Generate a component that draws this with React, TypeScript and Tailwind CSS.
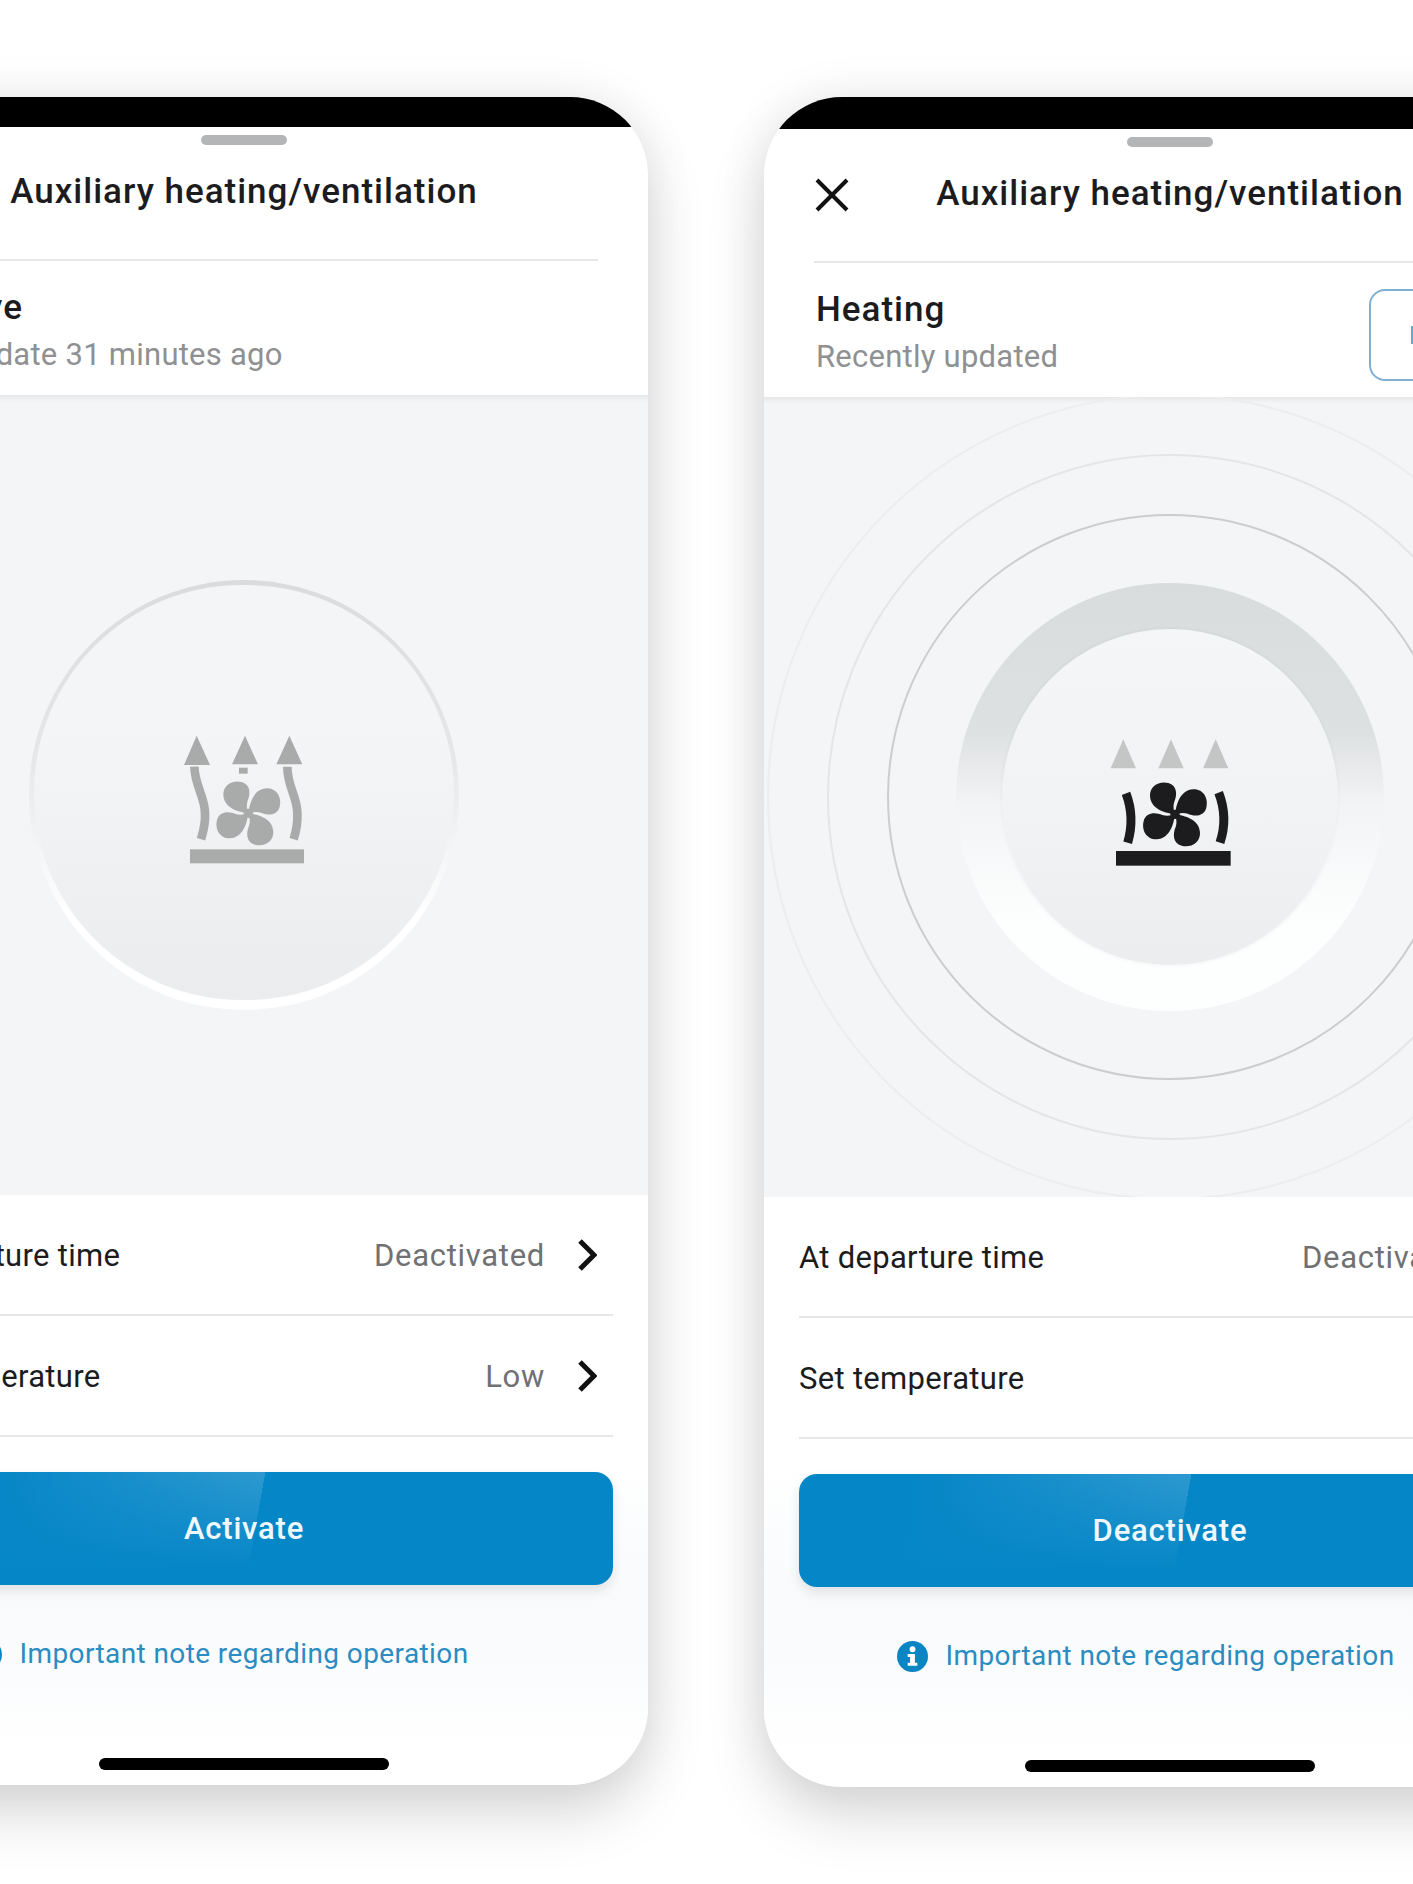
import type { ReactNode } from "react";

const ink = "#1c1c1e";

function FanBlades({ fill, dx = 0, dy = 0 }: { fill: string; dx?: number; dy?: number }) {
  const blade = "M295 340 C266 336 222 325 220 285 C219 254 248 239 275 246 C302 253 302 282 293 302 C288 316 292 330 295 340Z";
  return (
    <g transform={`translate(${dx} ${dy})`} fill={fill}>
      {[0, 90, 180, 270].map((r) => (
        <path key={r} d={blade} transform={`rotate(${r} 295 340)`} />
      ))}
      <circle cx="295" cy="340" r="14" />
    </g>
  );
}

function IdleIcon() {
  const c = "#a9abab";
  return (
    <svg viewBox="0 0 600 600" className="w-[200px] h-[200px] ml-[12px] mt-[15px] shrink-0">
      <path d="M140 107 L180 195 L102 195Z M285 107 L324 193 L246 193Z M418 107 L457 193 L379 193Z" fill={c} />
      <rect x="267" y="203" width="26" height="18" fill={c} />
      <path d="M133 200 C135 260 165 290 165 340 C167 370 160 395 153 418" fill="none" stroke={c} strokeWidth="26" />
      <path d="M412 200 C412 260 442 290 442 340 C444 370 438 395 431 418" fill="none" stroke={c} strokeWidth="26" />
      <FanBlades fill={c} />
      <rect x="120" y="448" width="342" height="42" fill={c} />
    </svg>
  );
}

function ActiveIcon() {
  return (
    <svg viewBox="0 0 600 600" className="w-[200px] h-[200px] mt-[6px] shrink-0">
      <path d="M160 118 L198 205 L122 205Z M303 118 L341 205 L265 205Z M437 118 L475 205 L399 205Z" fill="#c4c6c6" />
      <path d="M168 280 C187 330 187 380 173 428" fill="none" stroke={ink} strokeWidth="27" />
      <path d="M446 278 C466 330 466 380 450 428" fill="none" stroke={ink} strokeWidth="27" />
      <FanBlades fill={ink} dx={20} dy={3} />
      <rect x="138" y="453" width="344" height="44" fill={ink} />
    </svg>
  );
}

function Row({ label, value }: { label: string; value: string }) {
  return (
    <div className="h-[121px] border-b-2 border-[#e6e7e9] flex items-center justify-between">
      <span className="pt-[4px] text-[31px] tracking-[0.3px] text-[#1c1c1e]">{label}</span>
      <div className="flex items-center">
        <span className="pt-[4px] text-[31px] tracking-[0.7px] text-[#6f7173]">{value}</span>
        <svg viewBox="0 0 20 34" className="w-[20px] h-[34px] ml-[32px] mr-[16px]">
          <path d="M3 3 L17 17 L3 31" fill="none" stroke="#111" strokeWidth="5" />
        </svg>
      </div>
    </div>
  );
}

function Phone({
  size,
  bar,
  active,
  status,
  updated,
  action,
  children,
}: {
  size: string;
  bar: string;
  active?: boolean;
  status: string;
  updated: string;
  action: string;
  children: ReactNode;
}) {
  return (
    <div className={`${size} shrink-0 rounded-[78px] bg-white overflow-hidden flex flex-col shadow-[0_30px_60px_rgba(0,0,0,0.14),0_0_50px_rgba(0,0,0,0.08)]`}>
      <div className={`${bar} bg-black shrink-0`} />
      <div className="h-[268px] shrink-0 flex flex-col">
        <div className="h-[10px] w-[86px] mt-[8px] mx-auto rounded-full bg-[#b4b5b6]" />
        <div className="relative h-[116px] mx-[50px] border-b-2 border-[#e6e7e9] flex items-center justify-center pb-[19px]">
          {active && (
            <svg viewBox="0 0 36 36" className="absolute left-0 top-[30px] w-[36px] h-[36px]">
              <path d="M3 3 L33 33 M33 3 L3 33" stroke="#111" strokeWidth="4" fill="none" />
            </svg>
          )}
          <span className="text-[35px] tracking-[1px] font-medium text-[#1c1c1e] whitespace-nowrap">Auxiliary heating/ventilation</span>
        </div>
        <div className="flex-1 flex items-center justify-between pl-[52px]">
          <div className="flex flex-col gap-[6px] pt-[6px]">
            <span className="text-[35px] tracking-[1px] leading-[42px] font-medium text-[#1c1c1e]">{status}</span>
            <span className="text-[31px] tracking-[0.25px] leading-[40px] text-[#8e9092]">{updated}</span>
          </div>
          {active && (
            <div className="w-[207px] h-[92px] mt-[10px] rounded-[16px] border-2 border-[#7fb0d4] flex items-center pl-[40px] shrink-0">
              <span className="w-[8px] h-[18px] bg-[#5ba9d6]" />
            </div>
          )}
        </div>
      </div>
      <div className="h-[800px] shrink-0 bg-[#f4f5f7] flex items-center justify-center overflow-hidden shadow-[inset_0_7px_6px_-5px_rgba(0,0,0,0.08)]">
        {children}
      </div>
      <div className="flex-1 flex flex-col px-[35px] bg-[linear-gradient(to_bottom,#ffffff_0%,#ffffff_45%,#f8fafc_70%,#ffffff_95%)]">
        <Row label="At departure time" value="Deactivated" />
        <Row label="Set temperature" value="Low" />
        <div className="mt-[35px] h-[113px] pt-[2px] shrink-0 rounded-[18px] flex items-center justify-center text-[31px] tracking-[0.8px] font-medium text-[#eef8fd] shadow-[0_6px_12px_rgba(0,0,0,0.1)] bg-[linear-gradient(to_bottom,rgba(5,134,199,0)_0%,#0586c7_85%),linear-gradient(100deg,rgba(255,255,255,0)_15%,rgba(255,255,255,0.16)_51.5%,rgba(255,255,255,0)_51.5%),linear-gradient(#0586c7,#0586c7)]">
          {action}
        </div>
        <div className="mt-[48px] flex items-center justify-center gap-[17px]">
          <svg viewBox="0 0 32 32" className="w-[31px] h-[31px] ml-[-48px] shrink-0">
            <circle cx="16" cy="16" r="16" fill="#0a85c4" />
            <circle cx="16" cy="8.5" r="3" fill="#fff" />
            <path d="M11 13.5 H18.5 V22.5 H21 V25.5 H11 V22.5 H13.5 V16.5 H11Z" fill="#fff" />
          </svg>
          <span className="text-[28px] tracking-[0.4px] text-[#2a8cc0] whitespace-nowrap">Important note regarding operation</span>
        </div>
        <div className="mt-auto mb-[15px] w-[290px] h-[12px] mx-auto rounded-full bg-black" />
      </div>
    </div>
  );
}

export default function App() {
  return (
    <div
      className="w-[1413px] h-[1884px] bg-white overflow-hidden flex items-start pt-[97px]"
      style={{ fontFamily: "Roboto, sans-serif" }}
    >
      <div className="ml-[-160px] flex items-start gap-[116px]">
        <Phone size="w-[808px] h-[1688px]" bar="h-[30px]" status="Inactive" updated="Last update 31 minutes ago" action="Activate">
          <div className="w-[430px] h-[430px] pt-[5px] px-[5px] pb-[10px] rounded-full flex shrink-0 bg-[linear-gradient(to_bottom,#d9dbdd_0%,#e4e6e8_40%,#f2f3f5_60%,#ffffff_78%)]">
            <div className="w-full h-full rounded-full flex items-center justify-center bg-[linear-gradient(to_bottom,#f4f5f7_35%,#ebecee_100%)]">
              <IdleIcon />
            </div>
          </div>
        </Phone>
        <Phone size="w-[812px] h-[1690px]" bar="h-[32px]" active status="Heating" updated="Recently updated" action="Deactivate">
          <div className="w-[806px] h-[806px] rounded-full shrink-0 flex items-center justify-center border-2 border-[#ecedef]">
            <div className="w-[686px] h-[686px] rounded-full flex items-center justify-center border-2 border-[#e4e5e7]">
              <div className="w-[566px] h-[566px] rounded-full flex items-center justify-center border-2 border-[#cbcdcf]">
                <div className="w-[428px] h-[428px] rounded-full flex items-center justify-center bg-[linear-gradient(to_bottom,#d8dcdc_0%,#dee1e1_35%,#f3f4f5_52%,#fdfefe_80%)]">
                  <div className="w-[336px] h-[336px] rounded-full flex items-center justify-center bg-[linear-gradient(to_bottom,#f5f6f7_0%,#f1f2f3_60%,#ecedef_100%)] shadow-[0_0_4px_rgba(0,0,0,0.06)]">
                    <ActiveIcon />
                  </div>
                </div>
              </div>
            </div>
          </div>
        </Phone>
      </div>
    </div>
  );
}
